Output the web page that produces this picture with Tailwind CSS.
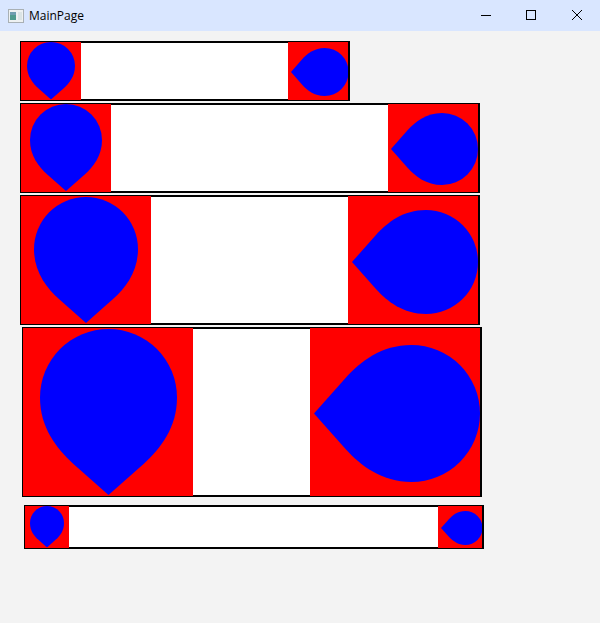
<!DOCTYPE html>
<html lang="en">
<head>
  <meta charset="UTF-8" />
  <title>MainPage</title>
  <script src="https://cdn.jsdelivr.net/npm/@tailwindcss/browser@4"></script>
</head>
<body class="bg-[#f3f3f3] h-[623px] overflow-hidden font-['Open_Sans',sans-serif]">

  <svg class="absolute w-0 h-0">
    <symbol id="dropDown" viewBox="0 0 100 121" preserveAspectRatio="none">
      <path d="M50 121 L24 98 C12 87 0 72 0 50 A50 50 0 0 1 100 50 C100 72 88 87 76 98 Z" fill="#0000ff"/>
    </symbol>
    <symbol id="dropLeft" viewBox="0 0 121 100" preserveAspectRatio="none">
      <path d="M0 50 L23 24 C34 12 49 0 71 0 A50 50 0 0 1 71 100 C49 100 34 88 23 76 Z" fill="#0000ff"/>
    </symbol>
  </svg>

  <!-- Title bar -->
  <header class="h-[31px] bg-[#d9e6ff] flex items-center relative">
    <svg class="ml-2 w-4 h-[14px]" viewBox="0 0 16 14">
      <rect x="0.500" y="0.500" width="15" height="13" fill="#eef1f2" stroke="#a9b0b5"/>
      <rect x="2" y="3" width="6" height="8" fill="#4f9a8e"/>
      <rect x="2" y="3" width="6" height="3" fill="#6f9db0"/>
      <rect x="10" y="3" width="4" height="8" fill="#dbe4e5"/>
    </svg>
    <span class="ml-[5px] text-[12px] text-black">MainPage</span>
    <div class="ml-auto flex items-center h-full">
      <svg class="w-[46px] h-full" viewBox="0 0 46 31"><path d="M19 15.500 H29" stroke="#000" fill="none"/></svg>
      <svg class="w-[46px] h-full" viewBox="0 0 46 31"><rect x="18.500" y="10.500" width="9" height="9" stroke="#000" fill="none"/></svg>
      <svg class="w-[46px] h-full" viewBox="0 0 46 31"><path d="M18 10 L28 20 M28 10 L18 20" stroke="#000" fill="none"/></svg>
    </div>
  </header>

  <main class="pt-[10px] flex flex-col">
    <div class="ml-5 w-[330px] h-[60px] border-2 border-black bg-white flex justify-between">
      <div class="w-[60px] -ml-px -my-px bg-[#ff0000] flex justify-center">
        <svg class="w-[48px] h-[57.500px]"><use href="#dropDown"/></svg>
      </div>
      <div class="w-[60px] -my-px bg-[#ff0000] flex items-center justify-end pt-[2px]">
        <svg class="w-[57.500px] h-[48px]"><use href="#dropLeft"/></svg>
      </div>
    </div>

    <div class="ml-5 mt-[2px] w-[460px] h-[90px] border-2 border-black bg-white flex justify-between">
      <div class="w-[90px] -ml-px -my-px bg-[#ff0000] flex justify-center">
        <svg class="w-[72px] h-[87px]"><use href="#dropDown"/></svg>
      </div>
      <div class="w-[90px] -my-px bg-[#ff0000] flex items-center justify-end pt-[2px]">
        <svg class="w-[87px] h-[72px]"><use href="#dropLeft"/></svg>
      </div>
    </div>

    <div class="ml-5 mt-[2px] w-[460px] h-[130px] border-2 border-black bg-white flex justify-between">
      <div class="w-[130px] -ml-px -my-px bg-[#ff0000] flex justify-center pt-px">
        <svg class="w-[104px] h-[126px]"><use href="#dropDown"/></svg>
      </div>
      <div class="w-[130px] -my-px bg-[#ff0000] flex items-center justify-end pt-[4px]">
        <svg class="w-[126px] h-[104px]"><use href="#dropLeft"/></svg>
      </div>
    </div>

    <div class="ml-[22px] mt-[2px] w-[460px] h-[170px] border-2 border-black bg-white flex justify-between">
      <div class="w-[170px] -ml-px -my-px bg-[#ff0000] flex justify-center pt-px">
        <svg class="w-[137px] h-[166px]"><use href="#dropDown"/></svg>
      </div>
      <div class="w-[170px] -my-px bg-[#ff0000] flex items-center justify-end pt-[3px]">
        <svg class="w-[166px] h-[137px]"><use href="#dropLeft"/></svg>
      </div>
    </div>

    <div class="ml-6 mt-2 w-[460px] h-[44px] border-2 border-black bg-white flex justify-between">
      <div class="w-[44px] -ml-px -my-px bg-[#ff0000] flex justify-center">
        <svg class="w-[34px] h-[41.500px]"><use href="#dropDown"/></svg>
      </div>
      <div class="w-[44px] -my-px bg-[#ff0000] flex items-center justify-end pt-[2px]">
        <svg class="w-[41.500px] h-[34px]"><use href="#dropLeft"/></svg>
      </div>
    </div>
  </main>

</body>
</html>
